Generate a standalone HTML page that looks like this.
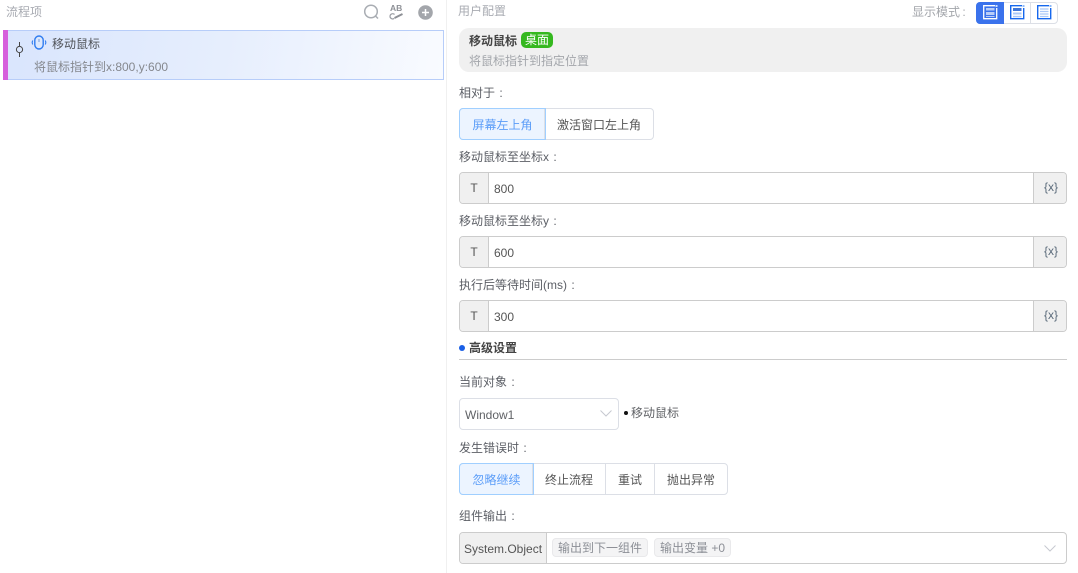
<!DOCTYPE html>
<html lang="zh-CN"><head><meta charset="utf-8"><title>用户配置</title>
<style>
*{box-sizing:border-box}
html,body{margin:0;padding:0;background:#fff}
body{position:relative;width:1078px;height:573px;overflow:hidden;font-family:"Liberation Sans","Noto Sans CJK SC",sans-serif;font-size:12px;color:#555}
.a{position:absolute;white-space:nowrap}
.c{display:inline-block;width:12px;text-align:center}
.lbl{position:absolute;left:459px;font-size:12px;line-height:16px;color:#5c5f66;white-space:nowrap}
.inp{position:absolute;left:459px;width:608px;height:32px;border:1px solid #ccc;border-radius:4px;background:#fff}
.inp .t{position:absolute;left:0;top:0;width:29px;height:30px;background:#f0f0f0;border-right:1px solid #ccc;border-radius:3px 0 0 3px;text-align:center;line-height:31px;color:#555;font-size:12px}
.inp .v{position:absolute;left:34px;top:0;line-height:33px;color:#555;font-size:12px}
.inp .x{position:absolute;right:0;top:0;width:33px;height:30px;background:#f0f0f0;border-left:1px solid #ccc;border-radius:0 3px 3px 0;text-align:center;line-height:28px;padding:0 0 0 2px;color:#5a6a7a;font-size:12px}
.seg{position:absolute;height:32px;display:flex;border:1px solid #dcdfe6;border-radius:4px;background:#fff}
.seg div{height:30px;line-height:32px;text-align:center;color:#555;font-size:12px;border-left:1px solid #dcdfe6}
.seg div:first-child{border-left:0;background:#ecf4ff;color:#5a9cf8;border-radius:3px 0 0 3px;box-shadow:0 0 0 1px #a0cfff}
.tag{position:absolute;top:538px;height:19px;line-height:18px;background:#f4f4f5;border:1px solid #e9e9eb;border-radius:4px;color:#8c8f96;font-size:12px;padding-left:5px;white-space:nowrap}
svg{position:absolute;display:block}
</style></head><body>

<div class="a" style="left:6px;top:4px;line-height:16px;color:#a8abb2">流程项</div>
<svg style="left:363px;top:4px" width="17" height="16" viewBox="0 0 17 16" fill="none"><circle cx="8" cy="7.500" r="6.300" stroke="#a9adb3" stroke-width="1.500"/><path d="M12.500 12l2.500 2.500" stroke="#a9adb3" stroke-width="1.500"/></svg>
<div class="a" style="left:390px;top:4px;font-size:8.500px;font-weight:bold;line-height:9px;color:#8d9096">AB</div>
<svg style="left:389px;top:5px" width="15" height="15" viewBox="0 0 15 15" fill="none"><path d="M5.500 9.500A2.600 2.600 0 1 0 5.200 13.400" stroke="#9a9da3" stroke-width="1.300"/><path d="M5.500 13L13.500 9" stroke="#8d9096" stroke-width="2"/></svg>
<svg style="left:418px;top:5px" width="15" height="15" viewBox="0 0 15 15"><circle cx="7.500" cy="7.500" r="7.300" fill="#a3a6ab"/><path d="M7.500 4v7M4 7.500h7" stroke="#fff" stroke-width="1.500"/></svg>

<div class="a" style="left:446px;top:0;width:1px;height:573px;background:#f0f0f0"></div>

<div class="a" style="left:3px;top:30px;width:441px;height:50px;background:linear-gradient(100deg,#d9e5fd 0%,#e6eefd 50%,#f9fbff 100%);border:1px solid #b7cdf9;border-left:0"></div>
<div class="a" style="left:3px;top:30px;width:5px;height:50px;background:#d65fdc"></div>
<svg style="left:14px;top:41px" width="11" height="17" viewBox="0 0 11 17" fill="none"><path d="M5.500 1v4.500M5.500 12v4" stroke="#444" stroke-width="1"/><circle cx="5.500" cy="8.500" r="3.100" stroke="#444" stroke-width="1"/></svg>
<svg style="left:31px;top:35px" width="16" height="15" viewBox="0 0 16 15" fill="none"><rect x="3.800" y="1" width="8.400" height="13" rx="4.200" stroke="#2f7cf0" stroke-width="1.400" fill="#dce8fd"/><path d="M8 4v3" stroke="#8fb2e8" stroke-width="1.400"/><path d="M1.800 5.500Q.600 7.500 1.800 9.500M14.200 5.500Q15.400 7.500 14.200 9.500" stroke="#2f7cf0" stroke-width="1.100"/></svg>
<div class="a" style="left:52px;top:36px;line-height:16px;color:#505359">移动鼠标</div>
<div class="a" style="left:34px;top:59px;line-height:16px;color:#85888e">将鼠标指针到x:800,y:600</div>

<div class="a" style="left:458px;top:3px;line-height:16px;color:#a8abb2">用户配置</div>
<div class="a" style="left:912px;top:4px;line-height:16px;color:#a3a6ab">显示模式<span class="c" style="width:8px">:</span></div>
<div class="a" style="left:976px;top:2px;width:82px;height:22px;border:1px solid #dcdfe6;border-radius:4px;background:#fff"></div>
<div class="a" style="left:976px;top:2px;width:28px;height:22px;background:#3a72ec;border-radius:4px 0 0 4px"></div>
<div class="a" style="left:1030px;top:2px;width:1px;height:22px;background:#dcdfe6"></div>
<svg style="left:983px;top:5px" width="15" height="15" viewBox="0 0 15 15" fill="none"><path d="M12 .7H.7v13h13V3" stroke="#fff" stroke-width="1.300"/><rect x="3" y="3" width="8.500" height="2.500" fill="#b8cdf8"/><rect x="3" y="7" width="8.500" height="3" fill="#b8cdf8"/><rect x="3" y="11" width="8.500" height="1" fill="#b8cdf8"/><rect x="12.500" y="0" width="2" height="2" fill="#cfe0ff"/></svg>
<svg style="left:1010px;top:5px" width="15" height="15" viewBox="0 0 15 15" fill="none"><path d="M12 .7H.7v13h13V3" stroke="#1668ee" stroke-width="1.400"/><rect x="3" y="3" width="8.500" height="3" fill="#3f76d8"/><rect x="3" y="7.500" width="8.500" height="2" fill="#a9c8f8"/><rect x="3" y="10.800" width="8.500" height="1.500" fill="#a9c8f8"/><rect x="12.500" y="0" width="2" height="2" fill="#8db8f8"/></svg>
<svg style="left:1037px;top:5px" width="15" height="15" viewBox="0 0 15 15" fill="none"><path d="M12 .7H.7v13h13V3" stroke="#1668ee" stroke-width="1.400"/><path d="M3 4h8.500M3 6.500h8.500M3 9h8.500M3 11.500h8.500" stroke="#a9c8f8" stroke-width="1.300"/><rect x="12.500" y="0" width="2" height="2" fill="#8db8f8"/></svg>

<div class="a" style="left:459px;top:28px;width:608px;height:44px;background:#f0f0f0;border-radius:10px"></div>
<div class="a" style="left:469px;top:33px;line-height:16px;font-weight:bold;color:#444">移动鼠标</div>
<div class="a" style="left:521px;top:32px;width:32px;height:16px;background:#35b81f;border-radius:5px;color:#fff;text-align:center;line-height:16px">桌面</div>
<div class="a" style="left:469px;top:53px;line-height:16px;color:#a3a6ab">将鼠标指针到指定位置</div>

<div class="lbl" style="top:85px">相对于<span class="c">:</span></div>
<div class="seg" style="left:459px;top:108px;width:195px"><div style="width:85px;margin-right:-1px">屏幕左上角</div><div style="width:109px">激活窗口左上角</div></div>

<div class="lbl" style="top:149px">移动鼠标至坐标x<span class="c">:</span></div>
<div class="inp" style="top:172px"><div class="t">T</div><div class="v">800</div><div class="x">{x}</div></div>
<div class="lbl" style="top:213px">移动鼠标至坐标y<span class="c">:</span></div>
<div class="inp" style="top:236px"><div class="t">T</div><div class="v">600</div><div class="x">{x}</div></div>
<div class="lbl" style="top:277px">执行后等待时间(ms)<span class="c">:</span></div>
<div class="inp" style="top:300px"><div class="t">T</div><div class="v">300</div><div class="x">{x}</div></div>

<div class="a" style="left:459px;top:345px;width:6px;height:6px;border-radius:50%;background:#1a5fe6"></div>
<div class="a" style="left:469px;top:340px;line-height:16px;font-weight:bold;color:#444">高级设置</div>
<div class="a" style="left:459px;top:359px;width:608px;height:1px;background:#ccc"></div>

<div class="lbl" style="top:374px">当前对象<span class="c">:</span></div>
<div class="a" style="left:459px;top:398px;width:160px;height:32px;border:1px solid #dcdfe6;border-radius:4px;background:#fff;line-height:32px;padding-left:5px;color:#606266">Window1</div>
<svg style="left:599px;top:409px" width="14" height="9" viewBox="0 0 14 9" fill="none"><path d="M1.500 1.500L7 7l5.500-5.500" stroke="#c6c9d0" stroke-width="1"/></svg>
<div class="a" style="left:624px;top:411px;width:4px;height:4px;border-radius:50%;background:#111"></div>
<div class="a" style="left:631px;top:405px;line-height:16px;color:#606266">移动鼠标</div>

<div class="lbl" style="top:440px">发生错误时<span class="c">:</span></div>
<div class="seg" style="left:459px;top:463px;width:269px"><div style="width:73px;margin-right:-1px">忽略继续</div><div style="width:73px">终止流程</div><div style="width:49px">重试</div><div style="width:73px">抛出异常</div></div>

<div class="lbl" style="top:508px">组件输出<span class="c">:</span></div>
<div class="a" style="left:459px;top:532px;width:608px;height:32px;border:1px solid #ccc;border-radius:4px;background:#fff"></div>
<div class="a" style="left:460px;top:533px;width:87px;height:30px;background:#f0f0f0;border-right:1px solid #ccc;border-radius:3px 0 0 3px;line-height:32px;padding-left:4px;color:#555">System.Object</div>
<div class="tag" style="left:552px;width:96px">输出到下一组件</div>
<div class="tag" style="left:654px;width:77px">输出变量 +0</div>
<svg style="left:1043px;top:544px" width="14" height="9" viewBox="0 0 14 9" fill="none"><path d="M1.500 1.500L7 7l5.500-5.500" stroke="#c6c9d0" stroke-width="1"/></svg>
</body></html>
